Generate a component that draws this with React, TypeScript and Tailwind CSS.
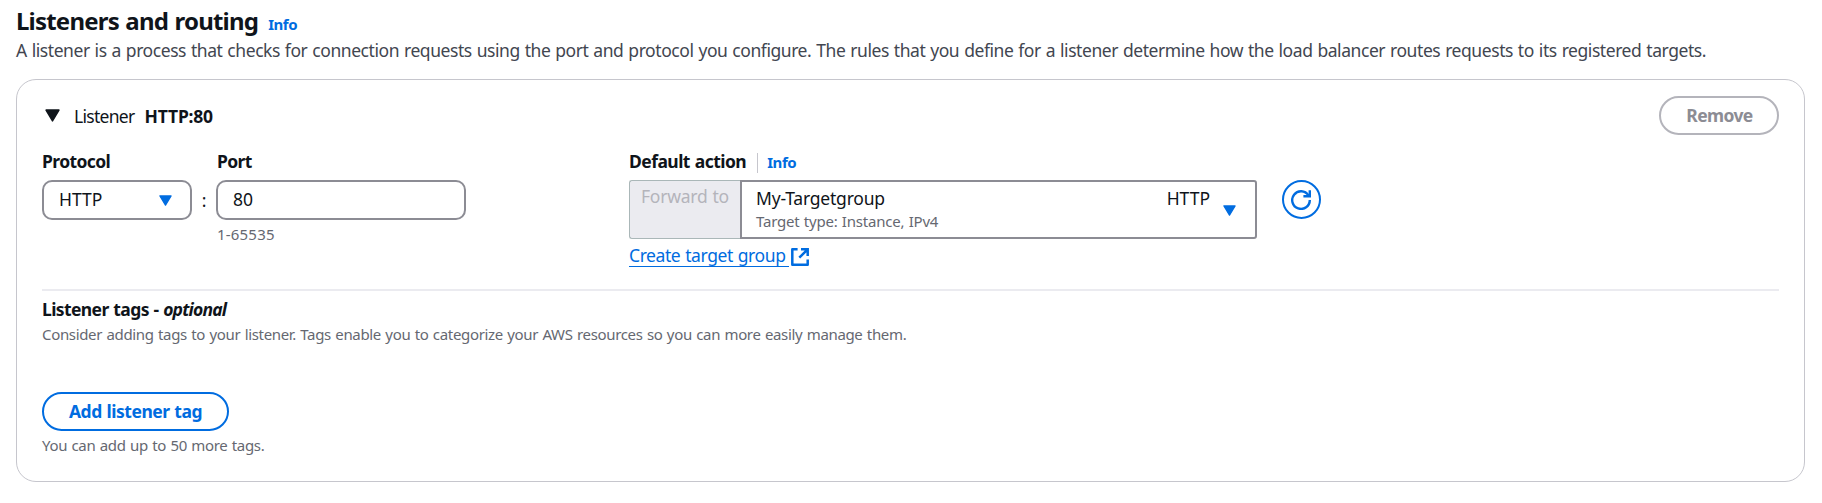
function Caret({ className }: { className: string }) {
  return (
    <svg viewBox="0 0 14 12" preserveAspectRatio="none" className={className} aria-hidden="true">
      <path d="M1 1h12L7 11z" fill="currentColor" stroke="currentColor" strokeWidth="1.4" strokeLinejoin="round" />
    </svg>
  );
}

function ExternalIcon() {
  return (
    <svg viewBox="0 0 18 18" className="ml-0.5 mt-[5px] h-[18px] w-[18px] shrink-0" fill="none" stroke="currentColor" strokeWidth="2.5" aria-hidden="true">
      <path d="M6.6 1.3H1.3v15.4h15.4v-5.3" strokeLinejoin="round" />
      <path d="M10 1.3h6.7V8M16.4 1.6L8.3 9.7" />
    </svg>
  );
}

function RefreshIcon() {
  return (
    <svg viewBox="0 0 20 20" className="-ml-px h-5 w-5" fill="none" stroke="currentColor" strokeWidth="2.4" aria-hidden="true">
      <path d="M18.8 10A8.8 8.8 0 1 1 17.4 5.3" />
      <path d="M18.8 0.2v6h-6.4" />
    </svg>
  );
}

export default function App() {
  return (
    <main className="h-[503px] w-full overflow-hidden bg-white pl-4 pr-[17px] pt-[7px] font-['Noto_Sans',sans-serif] text-[17.5px] leading-6 text-[#0f141a]">
      <header>
        <div className="flex h-7 items-baseline whitespace-nowrap">
          <h2 className="text-2xl leading-7 font-bold tracking-[-0.8px] [word-spacing:1px]">Listeners and routing</h2>
          <a className="ml-[10px] text-[15px] leading-5 font-bold tracking-[-0.45px] text-[#006ce0]">Info</a>
        </div>
        <p className="mt-[3px] whitespace-nowrap tracking-[-0.437px] [word-spacing:0.8px] text-[#424650]">
          A listener is a process that checks for connection requests using the port and protocol you configure. The rules that you define for a listener determine how the load balancer routes requests to its registered targets.
        </p>
      </header>

      <section className="mt-[17px] h-[403px] rounded-[20px] border border-[#c6c6cd] px-[25px] pt-4 whitespace-nowrap">
        <div className="flex h-[39px] justify-between">
          <div className="flex pt-2">
            <Caret className="ml-[3px] mt-[5px] h-[13px] w-[15px]" />
            <span className="ml-[14px] tracking-[-0.7px]">Listener</span>
            <strong className="ml-[10px] tracking-[-0.2px]">HTTP:80</strong>
          </div>
          <button disabled className="h-[39px] w-[120px] rounded-full border-2 border-[#b4b4bb] pb-0.5 pl-px font-bold tracking-[-0.6px] text-[#8c8c94]">Remove</button>
        </div>

        <div className="mt-[14px] flex h-[140px] items-start">
          <div className="w-[150px]">
            <label className="block font-bold tracking-[-0.6px]">Protocol</label>
            <button className="mt-[7px] flex h-10 w-full items-center justify-between rounded-[10px] border-2 border-[#8c8c94] pl-[15px] pr-[18px]">
              <span className="-mt-0.5">HTTP</span>
              <Caret className="h-[11px] w-[13px] text-[#006ce0]" />
            </button>
          </div>
          <span className="mt-[39px] w-6 text-center">:</span>
          <div className="w-[250px]">
            <label className="block pl-px font-bold tracking-[-0.6px]">Port</label>
            <div className="mt-[7px] flex h-10 items-center rounded-[10px] border-2 border-[#8c8c94] pb-0.5 pl-[15px]">80</div>
            <p className="mt-1 pl-px text-[15px] leading-5 tracking-[0.2px] text-[#656871]">1-65535</p>
          </div>
          <div className="ml-[163px] w-[628px]">
            <div className="flex">
              <label className="font-bold tracking-[-0.55px] [word-spacing:1px]">Default action</label>
              <span className="ml-[11px] mt-1 h-5 w-px bg-[#c6c6cd]" />
              <a className="ml-[9px] mt-[3px] text-[15px] leading-5 font-bold tracking-[-0.45px] text-[#006ce0]">Info</a>
            </div>
            <div className="mt-[7px] flex h-[59px]">
              <span className="w-[111px] rounded-l-[3px] border border-r-0 border-[#aab7b8] bg-[#ebebf0] pl-[11px] pt-[3px] tracking-[-0.24px] [word-spacing:0.8px] text-[#b4b4bb]">Forward to</span>
              <button className="flex flex-1 rounded-r-[3px] border-2 border-[#8c8c94] pl-[14px] pr-[19px] text-left">
                <span className="mt-1">
                  <span className="block tracking-[-0.2px]">My-Targetgroup</span>
                  <span className="block pt-px text-[15px] leading-5 tracking-[-0.2px] [word-spacing:0.6px] text-[#656871]">Target type: Instance, IPv4</span>
                </span>
                <span className="ml-auto mt-1">HTTP</span>
                <Caret className="ml-[13px] mt-[23px] h-[11px] w-[13px] text-[#006ce0]" />
              </button>
            </div>
            <a className="mt-1 flex text-[#006ce0]">
              <span className="h-6 w-[160px] border-b border-[#006ce0] tracking-[-0.42px] [word-spacing:0.8px]">Create target group</span>
              <ExternalIcon />
            </a>
          </div>
          <button aria-label="Refresh target groups" className="ml-[25px] mt-[31px] flex h-[39px] w-[39px] items-center justify-center rounded-full border-2 border-[#006ce0] text-[#006ce0]">
            <RefreshIcon />
          </button>
        </div>

        <div className="h-0.5 bg-[#ebebf0]" />

        <h3 className="mt-1.5 font-bold tracking-[-0.6px] [word-spacing:0.7px]">
          Listener tags - <i className="tracking-[-0.8px]">optional</i>
        </h3>
        <p className="mt-[3px] text-[15px] leading-5 tracking-[-0.337px] [word-spacing:0.8px] text-[#656871]">
          Consider adding tags to your listener. Tags enable you to categorize your AWS resources so you can more easily manage them.
        </p>
        <button className="mt-12 block h-[39px] w-[187px] rounded-full border-2 border-[#006ce0] pb-0.5 font-bold tracking-[-0.45px] [word-spacing:0.5px] text-[#006ce0]">Add listener tag</button>
        <p className="mt-1 text-[15px] leading-5 tracking-[-0.33px] [word-spacing:0.8px] text-[#656871]">You can add up to 50 more tags.</p>
      </section>
    </main>
  );
}
